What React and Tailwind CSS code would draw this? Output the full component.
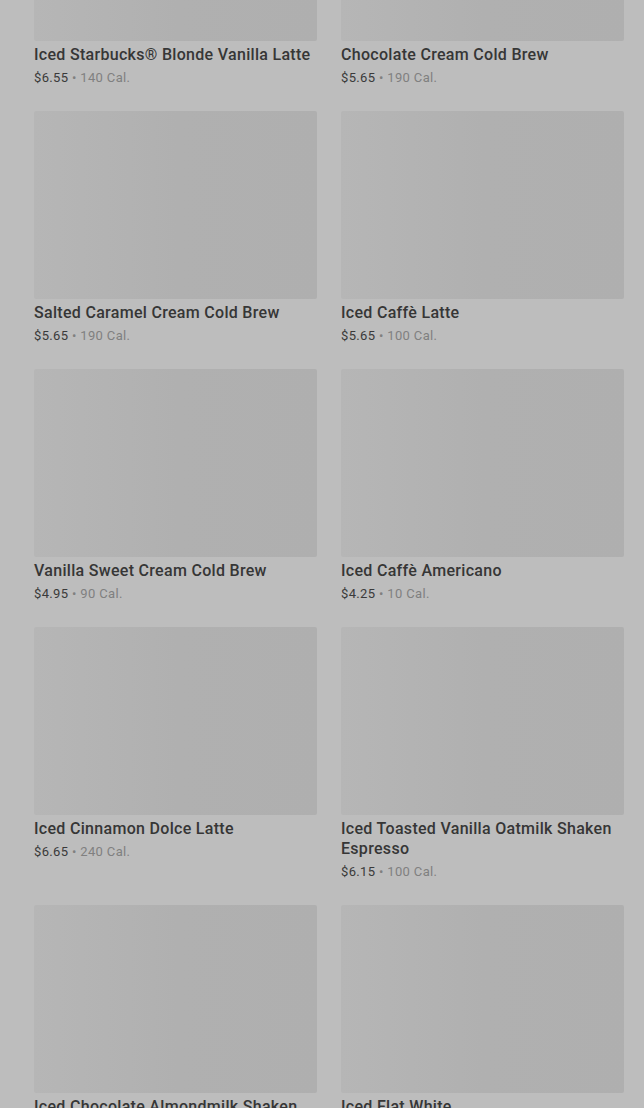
const items = [
  { name: 'Iced Starbucks® Blonde Vanilla Latte', price: '$6.55', cal: '140 Cal.' },
  { name: 'Chocolate Cream Cold Brew', price: '$5.65', cal: '190 Cal.' },
  { name: 'Salted Caramel Cream Cold Brew', price: '$5.65', cal: '190 Cal.' },
  { name: 'Iced Caffè Latte', price: '$5.65', cal: '100 Cal.' },
  { name: 'Vanilla Sweet Cream Cold Brew', price: '$4.95', cal: '90 Cal.' },
  { name: 'Iced Caffè Americano', price: '$4.25', cal: '10 Cal.' },
  { name: 'Iced Cinnamon Dolce Latte', price: '$6.65', cal: '240 Cal.' },
  { name: 'Iced Toasted Vanilla Oatmilk Shaken Espresso', price: '$6.15', cal: '100 Cal.' },
  { name: 'Iced Chocolate Almondmilk Shaken Espresso', price: '$6.15', cal: '160 Cal.' },
  { name: 'Iced Flat White', price: '$5.95', cal: '160 Cal.' },
]

function Card({ item }) {
  return (
    <div className="flex flex-col">
      <div className="h-[188px] w-full rounded-[2px] bg-gradient-to-r from-[#b6b6b6] via-[#b0b0b0] to-[#afafaf]" />
      <div className="pt-[4px] text-[16px] leading-[20px] font-medium text-[#363636] tracking-[0.3px]">
        {item.name}
      </div>
      <div className="mt-[3px] text-[13px] leading-[20px] text-[#3a3a3a] tracking-[0.35px]">
        {item.price}
        <span className="text-[#808080]"> • {item.cal}</span>
      </div>
    </div>
  )
}

export default function App() {
  return (
    <div className="h-[1108px] overflow-hidden bg-[#bdbdbd]" style={{ fontFamily: 'Roboto, "Liberation Sans", sans-serif' }}>
      <div className="mt-[-147px] grid grid-cols-2 gap-x-[24px] gap-y-[23px] pl-[34px] pr-[20px]">
        {items.map((item) => (
          <Card key={item.name} item={item} />
        ))}
      </div>
    </div>
  )
}
